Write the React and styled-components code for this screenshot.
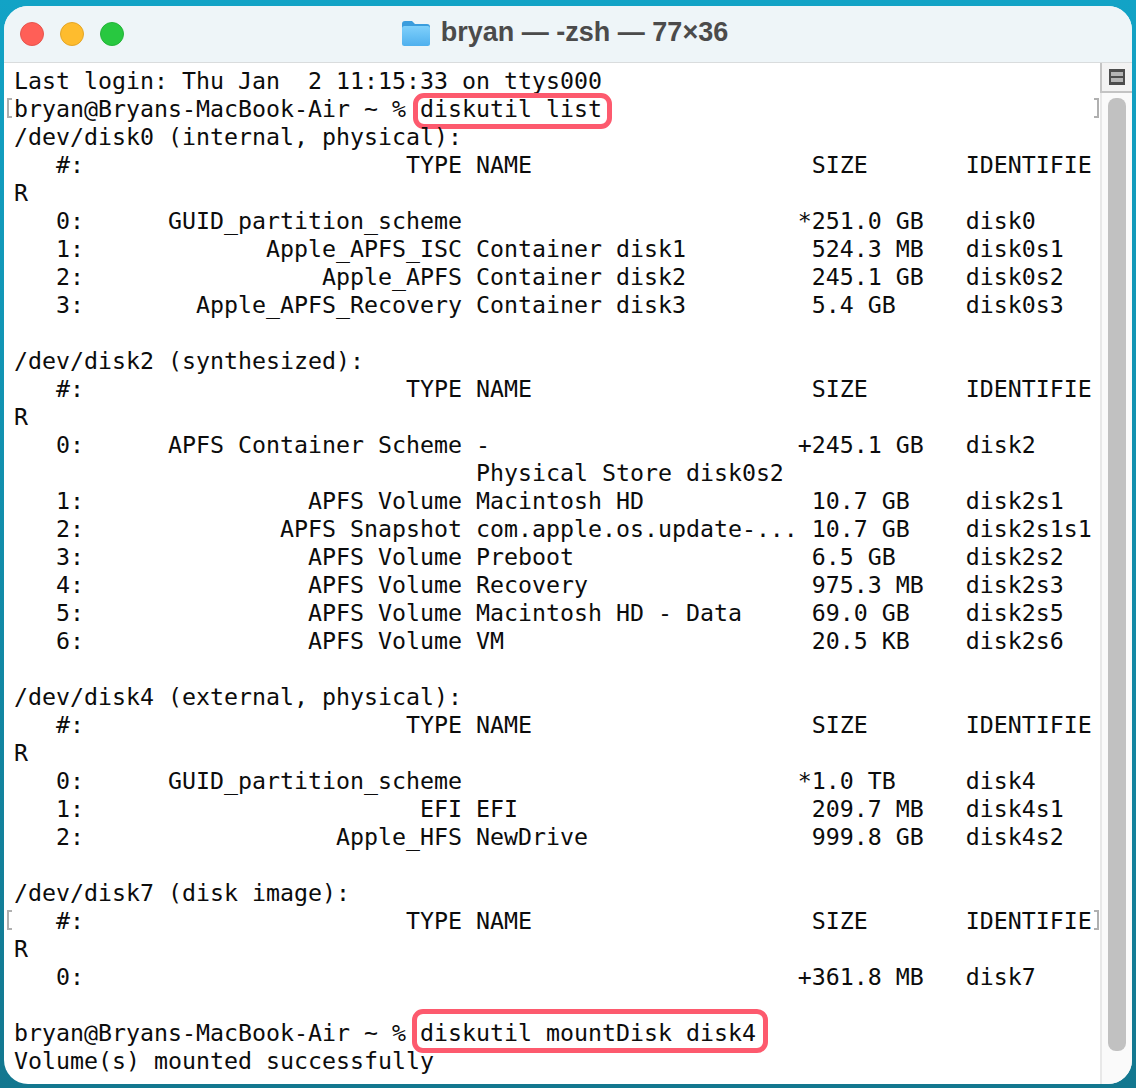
import React from 'react'
import styled, { createGlobalStyle } from 'styled-components'

const disk = (idx, type, name, size, id) =>
  `   ${idx}:` + type.padStart(27) + ' ' + name.padEnd(23) + size.padEnd(12) + id

const head = () => disk('#', 'TYPE', 'NAME', ' SIZE', 'IDENTIFIE')

const LINES = [
  { text: 'Last login: Thu Jan  2 11:15:33 on ttys000' },
  { before: 'bryan@Bryans-MacBook-Air ~ % ', mark: 'diskutil list', brackets: true },
  { text: '/dev/disk0 (internal, physical):' },
  { text: head() },
  { text: 'R' },
  { text: disk(0, 'GUID_partition_scheme', '', '*251.0 GB', 'disk0') },
  { text: disk(1, 'Apple_APFS_ISC', 'Container disk1', ' 524.3 MB', 'disk0s1') },
  { text: disk(2, 'Apple_APFS', 'Container disk2', ' 245.1 GB', 'disk0s2') },
  { text: disk(3, 'Apple_APFS_Recovery', 'Container disk3', ' 5.4 GB', 'disk0s3') },
  { text: '' },
  { text: '/dev/disk2 (synthesized):' },
  { text: head() },
  { text: 'R' },
  { text: disk(0, 'APFS Container Scheme', '-', '+245.1 GB', 'disk2') },
  { text: ''.padEnd(33) + 'Physical Store disk0s2' },
  { text: disk(1, 'APFS Volume', 'Macintosh HD', ' 10.7 GB', 'disk2s1') },
  { text: disk(2, 'APFS Snapshot', 'com.apple.os.update-...', ' 10.7 GB', 'disk2s1s1') },
  { text: disk(3, 'APFS Volume', 'Preboot', ' 6.5 GB', 'disk2s2') },
  { text: disk(4, 'APFS Volume', 'Recovery', ' 975.3 MB', 'disk2s3') },
  { text: disk(5, 'APFS Volume', 'Macintosh HD - Data', ' 69.0 GB', 'disk2s5') },
  { text: disk(6, 'APFS Volume', 'VM', ' 20.5 KB', 'disk2s6') },
  { text: '' },
  { text: '/dev/disk4 (external, physical):' },
  { text: head() },
  { text: 'R' },
  { text: disk(0, 'GUID_partition_scheme', '', '*1.0 TB', 'disk4') },
  { text: disk(1, 'EFI', 'EFI', ' 209.7 MB', 'disk4s1') },
  { text: disk(2, 'Apple_HFS', 'NewDrive', ' 999.8 GB', 'disk4s2') },
  { text: '' },
  { text: '/dev/disk7 (disk image):' },
  { text: head(), brackets: true },
  { text: 'R' },
  { text: disk(0, '', '', '+361.8 MB', 'disk7') },
  { text: '' },
  { before: 'bryan@Bryans-MacBook-Air ~ % ', mark: 'diskutil mountDisk disk4', tall: true },
  { text: 'Volume(s) mounted successfully' },
]

const GlobalStyle = createGlobalStyle`
  html, body {
    margin: 0;
    padding: 0;
  }
`

const Desktop = styled.div`
  width: 1136px;
  height: 1088px;
  box-sizing: border-box;
  padding: 6px 4px 4px 4px;
  background: linear-gradient(180deg, #12a3c6 0%, #13778f 100%);
`

const Window = styled.div`
  height: 100%;
  display: flex;
  flex-direction: column;
  border-radius: 24px;
  overflow: hidden;
  background: #fff;
`

const TitleBar = styled.div`
  position: relative;
  flex: 0 0 57px;
  display: flex;
  align-items: center;
  justify-content: center;
  gap: 10px;
  box-sizing: border-box;
  padding: 0 7px 3px 0;
  background: #eef5f8;
  border-bottom: 1px solid #d9dcdd;
`

const Lights = styled.div`
  position: absolute;
  left: 16px;
  top: 16px;
  display: flex;
  gap: 16px;
`

const Light = styled.span`
  width: 24px;
  height: 24px;
  border-radius: 50%;
  box-sizing: border-box;
  background: ${props => props.color};
  border: 1px solid ${props => props.edge};
`

const Title = styled.div`
  font-family: "Liberation Sans", Arial, sans-serif;
  font-weight: bold;
  font-size: 27px;
  color: #4b4b4b;
`

const Body = styled.div`
  flex: 1;
  display: flex;
  min-height: 0;
`

const Screen = styled.div`
  flex: 1;
  padding: 4px 0 0 10px;
  color: #0c0c0c;
  font-family: "DejaVu Sans Mono", monospace;
  font-size: 23.25px;
  line-height: 28px;
`

const Line = styled.div`
  position: relative;
  height: 28px;
  white-space: pre;

  ${props => props.$brackets && `
    &::before, &::after {
      content: '';
      position: absolute;
      top: 3px;
      width: 3px;
      height: 16px;
      border: 2px solid #b0b0b0;
    }
    &::before {
      left: -7px;
      border-right: none;
    }
    &::after {
      left: 1080px;
      border-left: none;
    }
  `}
`

const Mark = styled.span`
  position: relative;

  &::after {
    content: '';
    position: absolute;
    left: ${props => (props.$tall ? '-8px' : '-7px')};
    right: ${props => (props.$tall ? '-12px' : '-10px')};
    top: ${props => (props.$tall ? '-10px' : '-2px')};
    bottom: -7px;
    border: 5px solid #fd5a6e;
    border-radius: 11px;
  }
`

const ScrollBar = styled.div`
  flex: 0 0 30px;
  display: flex;
  flex-direction: column;
  background: #fafafa;
  border-left: 2px solid #e8e8e8;
`

const SplitBox = styled.div`
  flex: 0 0 28px;
  display: flex;
  align-items: center;
  justify-content: center;
  background: #f3f3f3;
  border-bottom: 2px solid #c4c4c4;
  margin-left: -2px;
  border-left: 2px solid #c4c4c4;
`

const Track = styled.div`
  flex: 1;
  padding: 5px 6px 33px 6px;
`

const Thumb = styled.div`
  height: 100%;
  border-radius: 8px;
  background: #c1c1c1;
`

const FolderIcon = () => (
  <svg width="30" height="28" viewBox="0 0 30 28">
    <defs>
      <linearGradient id="folderFront" x1="0" y1="0" x2="0" y2="1">
        <stop offset="0" stopColor="#7fd0fb" />
        <stop offset="1" stopColor="#4fb0ee" />
      </linearGradient>
    </defs>
    <path d="M1 5a3 3 0 0 1 3-3h7l3 3h12a3 3 0 0 1 3 3v4H1z" fill="#3b9ddd" />
    <rect x="1" y="7" width="28" height="20" rx="2.5" fill="url(#folderFront)" />
  </svg>
)

const SplitIcon = () => (
  <svg width="16" height="16" viewBox="0 0 16 16">
    <rect width="16" height="16" fill="#4d4d4d" />
    <rect x="2" y="3" width="12" height="4" fill="#b5b5b5" />
    <rect x="2" y="9" width="12" height="4" fill="#b5b5b5" />
  </svg>
)

export default function App() {
  return (
    <Desktop>
      <GlobalStyle />
      <Window>
        <TitleBar>
          <Lights>
            <Light color="#ff5f57" edge="#e5544d" />
            <Light color="#febc2e" edge="#e3a527" />
            <Light color="#28c840" edge="#24b339" />
          </Lights>
          <FolderIcon />
          <Title>bryan — -zsh — 77×36</Title>
        </TitleBar>
        <Body>
          <Screen>
            {LINES.map((line, i) => (
              <Line key={i} $brackets={line.brackets}>
                {line.mark ? (
                  <>
                    {line.before}
                    <Mark $tall={line.tall}>{line.mark}</Mark>
                  </>
                ) : (
                  line.text
                )}
              </Line>
            ))}
          </Screen>
          <ScrollBar>
            <SplitBox>
              <SplitIcon />
            </SplitBox>
            <Track>
              <Thumb />
            </Track>
          </ScrollBar>
        </Body>
      </Window>
    </Desktop>
  )
}
